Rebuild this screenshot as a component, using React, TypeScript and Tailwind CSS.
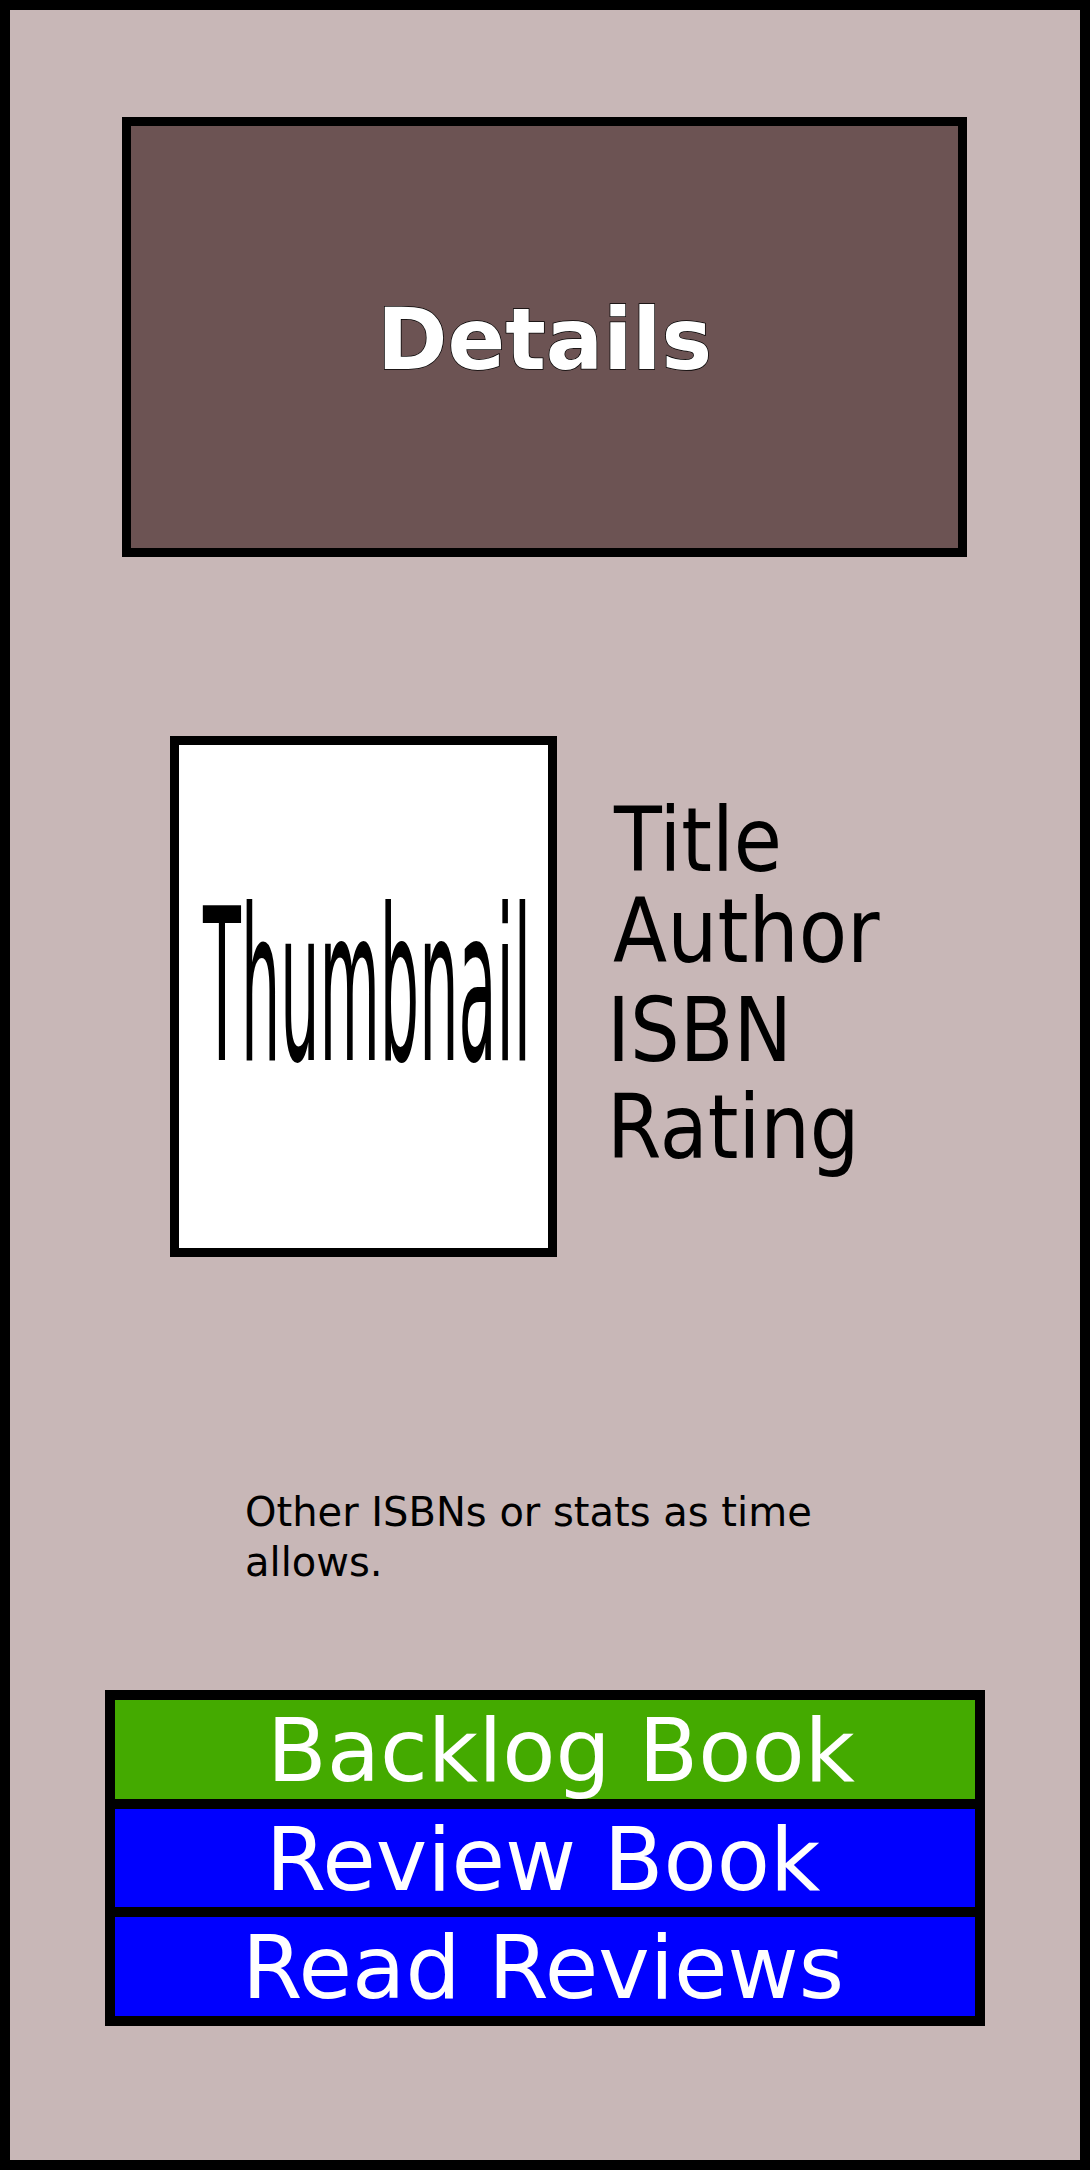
import React from "react";

const font = { fontFamily: '"DejaVu Sans", "Liberation Sans", sans-serif' };

export default function App() {
  return (
    <div
      className="w-[1090px] h-[2170px] border-[10px] border-black bg-[#c8b7b7] flex flex-col items-start"
      style={font}
    >
      {/* Details header */}
      <div className="mt-[107px] ml-[112px] w-[845px] h-[440px] border-[9px] border-black bg-[#6c5353] flex items-center justify-center pt-[5px]">
        <span className="text-[85px] leading-none font-bold text-white [-webkit-text-stroke:1.5px_#000] [paint-order:stroke_fill]">
          Details
        </span>
      </div>

      {/* Thumbnail + meta */}
      <div className="mt-[179px] ml-[160px] flex items-start">
        <div className="w-[387px] h-[521px] border-[9px] border-black bg-white flex items-center justify-center pb-[18px] pl-[7px]">
          <span className="text-[62px] leading-none whitespace-nowrap text-black scale-y-[3.429]">
            Thumbnail
          </span>
        </div>
        <div className="mt-[64px] ml-[57px] flex flex-col text-[89px] leading-[80px] text-black whitespace-nowrap">
          <div className="h-[91px] origin-left scale-x-[0.88]">Title</div>
          <div className="h-[99px] -ml-[1px] origin-left scale-x-[0.89]">Author</div>
          <div className="h-[97px] -ml-[7px] origin-left scale-x-[0.88]">ISBN</div>
          <div className="h-[80px] -ml-[7px] origin-left scale-x-[0.88]">Rating</div>
        </div>
      </div>

      {/* Other text */}
      <p className="mt-[230px] ml-[235px] w-[600px] text-[40px] leading-[50px] text-black">
        Other ISBNs or stats as time allows.
      </p>

      {/* Buttons */}
      <div className="mt-[103px] ml-[95px] w-[880px] border-[10px] border-black flex flex-col text-white text-[87px] leading-none">
        <div className="h-[99px] bg-[#44aa00] flex items-center justify-center pl-[32px] pt-[4px] whitespace-nowrap">
          Backlog Book
        </div>
        <div className="h-[108px] border-t-[10px] border-black bg-[#0000ff] flex items-center justify-center pt-[4px] pr-[4px] whitespace-nowrap">
          Review Book
        </div>
        <div className="h-[109px] border-t-[10px] border-black bg-[#0000ff] flex items-center justify-center pt-[4px] pr-[4px] whitespace-nowrap">
          Read Reviews
        </div>
      </div>
    </div>
  );
}
